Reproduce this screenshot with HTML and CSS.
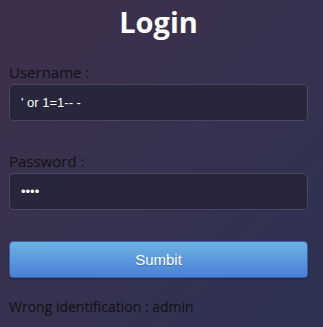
FILE: index.html
```html
<!DOCTYPE html>
<html lang="en">
<head>
    <meta charset="UTF-8">
    <meta name="viewport" content="width=device-width, initial-scale=1.0">
    <title>Login</title>
    <link rel="stylesheet" href="styles.css">
</head>
<body>
    <div class="container">
        <h1>Login</h1>
        <form class="login-form">
            <label for="username">Username :</label>
            <input type="text" id="username" value="' or 1=1-- -">

            <label for="password">Password :</label>
            <input type="password" id="password" value="abcd">

            <button type="button">Sumbit</button>
        </form>
        <p class="message">Wrong identification : admin</p>
    </div>
</body>
</html>
```

FILE: styles.css
```css
html, body {
    height: 100%;
}
body {
    margin: 0;
    font-family: "Open Sans", sans-serif;
    background: linear-gradient(135deg, #3f2f48 0%, #36324f 50%, #2d3152 100%);
    color: #111;
}
.container {
    padding: 2px 15px 0 9px;
}
h1 {
    margin: 0;
    text-align: center;
    font-size: 29px;
    line-height: 40px;
    font-weight: 700;
    color: #fff;
}
.login-form {
    display: flex;
    flex-direction: column;
    margin-top: 20px;
}
label {
    font-size: 15px;
    line-height: 20px;
    margin-bottom: 2px;
}
input {
    box-sizing: border-box;
    height: 37px;
    padding: 0 10px 0 11px;
    margin-bottom: 30px;
    border: 1px solid #4a4661;
    border-radius: 4px;
    background: #28263a;
    color: #fff;
    font-family: "Liberation Sans", Arial, sans-serif;
    font-size: 13px;
    outline: none;
}
button {
    height: 37px;
    margin-top: 1px;
    border: 1px solid #3a5fb0;
    border-radius: 4px;
    background: linear-gradient(to bottom, #6cb3e2, #4b7fd8);
    color: #fff;
    font-family: "Liberation Sans", Arial, sans-serif;
    font-size: 15px;
    text-shadow: 0 1px 1px rgba(0, 0, 0, 0.25);
    box-shadow: 0 1px 2px rgba(0, 0, 0, 0.3);
}
.message {
    margin: 19px 0 0 0;
    font-size: 14px;
    line-height: 20px;
}
```
